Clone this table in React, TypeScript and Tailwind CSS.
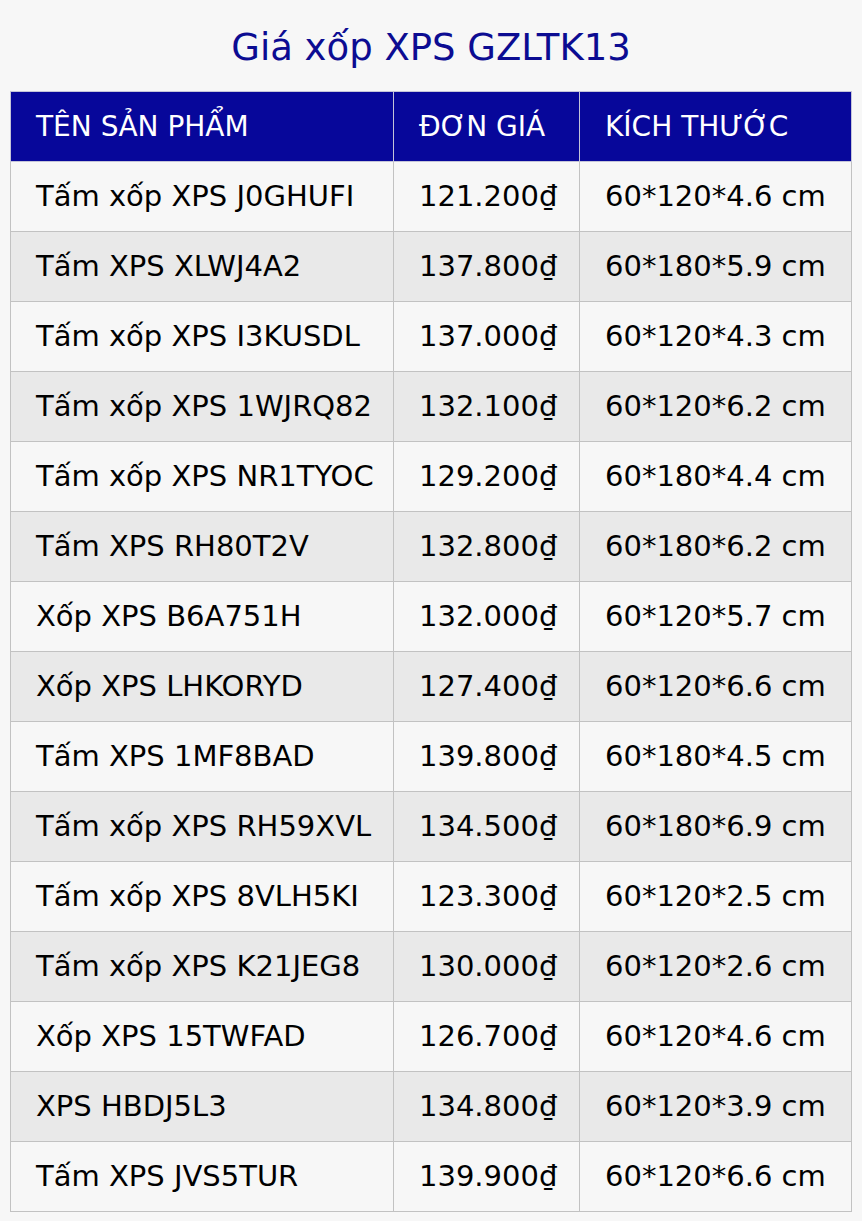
import React from 'react';

const rows: [string, string, string][] = [
  ['Tấm xốp XPS J0GHUFI', '121.200₫', '60*120*4.6 cm'],
  ['Tấm XPS XLWJ4A2', '137.800₫', '60*180*5.9 cm'],
  ['Tấm xốp XPS I3KUSDL', '137.000₫', '60*120*4.3 cm'],
  ['Tấm xốp XPS 1WJRQ82', '132.100₫', '60*120*6.2 cm'],
  ['Tấm xốp XPS NR1TYOC', '129.200₫', '60*180*4.4 cm'],
  ['Tấm XPS RH80T2V', '132.800₫', '60*180*6.2 cm'],
  ['Xốp XPS B6A751H', '132.000₫', '60*120*5.7 cm'],
  ['Xốp XPS LHKORYD', '127.400₫', '60*120*6.6 cm'],
  ['Tấm XPS 1MF8BAD', '139.800₫', '60*180*4.5 cm'],
  ['Tấm xốp XPS RH59XVL', '134.500₫', '60*180*6.9 cm'],
  ['Tấm xốp XPS 8VLH5KI', '123.300₫', '60*120*2.5 cm'],
  ['Tấm xốp XPS K21JEG8', '130.000₫', '60*120*2.6 cm'],
  ['Xốp XPS 15TWFAD', '126.700₫', '60*120*4.6 cm'],
  ['XPS HBDJ5L3', '134.800₫', '60*120*3.9 cm'],
  ['Tấm XPS JVS5TUR', '139.900₫', '60*120*6.6 cm'],
];

export default function App() {
  return (
    <div className="min-h-[1221px] bg-[#f7f7f7] px-[10px] pt-[24px] pb-[10px] font-['DejaVu_Sans',sans-serif]">
      <h1 className="mb-[20px] text-center text-[37px] leading-[47px] text-[#0c0c92]">Giá xốp XPS GZLTK13</h1>
      <table className="w-[841px] table-fixed border-collapse text-[29px] text-black">
        <colgroup>
          <col className="w-[383px]" />
          <col className="w-[186px]" />
          <col className="w-[272px]" />
        </colgroup>
        <thead>
          <tr className="h-[70px] bg-[#07079a] text-[28px] text-white">
            <th className="border border-[#c4c4d8] pl-[25px] text-left font-normal">TÊN SẢN PHẨM</th>
            <th className="border border-[#c4c4d8] pl-[25px] text-left font-normal">ĐƠN GIÁ</th>
            <th className="border border-[#c4c4d8] pl-[25px] text-left font-normal">KÍCH THƯỚC</th>
          </tr>
        </thead>
        <tbody>
          {rows.map(([name, price, size], i) => (
            <tr key={name} className={`h-[70px] ${i % 2 === 0 ? 'bg-[#f7f7f7]' : 'bg-[#e9e9e9]'}`}>
              <td className="border border-[#c2c2c2] pl-[25px]">{name}</td>
              <td className="border border-[#c2c2c2] pl-[25px]">{price}</td>
              <td className="border border-[#c2c2c2] pl-[25px]">{size}</td>
            </tr>
          ))}
        </tbody>
      </table>
    </div>
  );
}
